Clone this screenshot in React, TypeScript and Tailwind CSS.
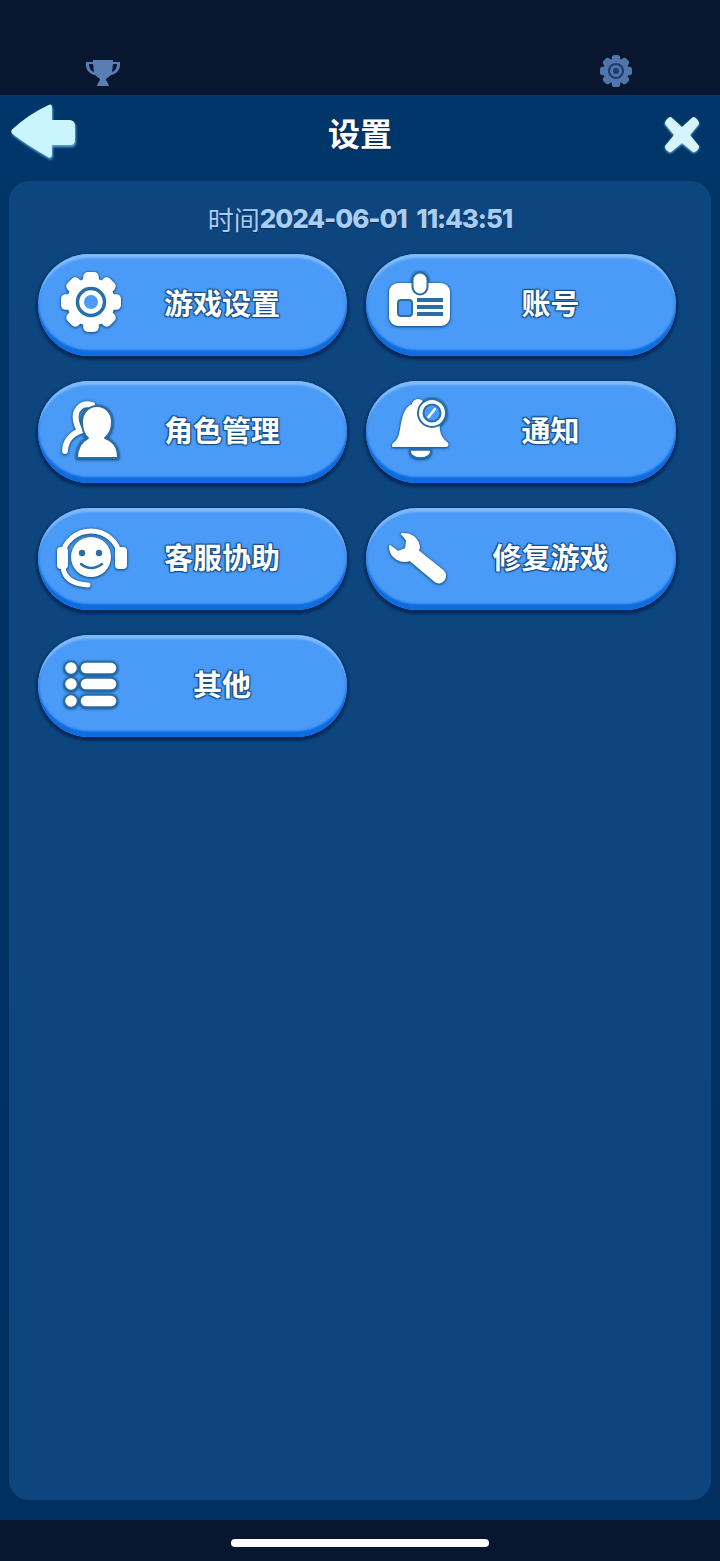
import type { ReactNode } from 'react';

const ICON_CLASS = 'w-[72px] h-[72px] overflow-visible [filter:drop-shadow(0_0_1px_#1a5a96)_drop-shadow(0_1px_1px_#1a5a96)]';
const TEETH = [0, 45, 90, 135, 180, 225, 270, 315];

function Gear({ cx, cy, r, fill }: { cx: number; cy: number; r: number; fill: string }) {
  const w = r * 0.52;
  return (
    <g fill={fill}>
      <circle cx={cx} cy={cy} r={r * 0.8} />
      {TEETH.map((a) => (
        <rect key={a} x={cx - w / 2} y={cy - r} width={w} height={r * 0.5} rx={r * 0.16} transform={`rotate(${a} ${cx} ${cy})`} />
      ))}
    </g>
  );
}

function GearIcon() {
  return (
    <svg viewBox="0 0 72 72" className={ICON_CLASS}>
      <Gear cx={36} cy={33} r={30} fill="#fff" />
      <circle cx={36} cy={33} r={13.5} fill="#fff" stroke="#2a6ea8" strokeWidth={3.5} />
      <circle cx={36} cy={33} r={7} fill="#4a9bf7" />
    </svg>
  );
}

function PersonIcon() {
  return (
    <svg viewBox="0 0 72 72" className={ICON_CLASS}>
      <path d="M37 9C26 6 19 14 21 25C22 30 24 33 25 35C16 38 10 46 10 55" fill="none" stroke="#fff" strokeWidth={6} strokeLinecap="round" />
      <path d="M22 62C22 50 27 45 33 42C28 38 27 32 27 26C27 16 34 10 42 10C50 10 57 16 57 26C57 32 55 38 50 42C58 45 63 50 63 62Z" fill="#fff" stroke="#2a6ea8" strokeWidth={2} strokeLinejoin="round" />
    </svg>
  );
}

function CardIcon() {
  return (
    <svg viewBox="0 0 72 72" className={ICON_CLASS}>
      <g transform="translate(1 0)">
        <rect x={5} y={14} width={61} height={43} rx={9} fill="#fff" />
        <rect x={28.5} y={3.5} width={15} height={22} rx={7.5} fill="#fff" stroke="#2a6ea8" strokeWidth={2} />
        <rect x={14} y={31} width={14} height={16} rx={3} fill="#4a9bf7" stroke="#2a6ea8" strokeWidth={2} />
        <rect x={33} y={29} width={26} height={4} fill="#2a6ea8" />
        <rect x={33} y={36} width={26} height={4} fill="#2a6ea8" />
        <rect x={33} y={43} width={26} height={4} fill="#2a6ea8" />
      </g>
    </svg>
  );
}

function BellIcon() {
  return (
    <svg viewBox="0 0 72 72" className={ICON_CLASS}>
      <g transform="translate(1 0)">
        <path d="M26 54H47C47 60 42 62 36.5 62C31 62 26 60 26 54Z" fill="#fff" stroke="#2a6ea8" strokeWidth={1.5} />
        <path d="M8 50C8 47 11 46 13 43C18 36 15 14 28 8C29 3 37 1 39 6C50 10 55 20 56 34C57 41 61 44 64 47C65 49 64 51 62 51H10C9 51 8 51 8 50Z" fill="#fff" />
        <circle cx={48} cy={17} r={14} fill="#fff" stroke="#2a6ea8" strokeWidth={2} />
        <circle cx={48} cy={17} r={8.5} fill="#4a9bf7" stroke="#2a6ea8" strokeWidth={2} />
        <path d="M44.5 21L51 13" stroke="#fff" strokeWidth={2.5} strokeLinecap="round" />
      </g>
    </svg>
  );
}

function HeadsetIcon() {
  return (
    <svg viewBox="0 0 72 72" className={ICON_CLASS}>
      <path d="M7 32A29.5 29.5 0 0 1 65 32" fill="none" stroke="#fff" strokeWidth={5} />
      <rect x={2} y={24} width={11} height={22} rx={4} fill="#fff" />
      <rect x={60} y={24} width={12} height={22} rx={4} fill="#fff" />
      <path d="M8 44C9 54 16 61 33 62" fill="none" stroke="#fff" strokeWidth={5} strokeLinecap="round" />
      <circle cx={36} cy={34} r={20} fill="#fff" />
      <circle cx={27} cy={30} r={3.2} fill="#2a6ea8" />
      <circle cx={44} cy={30} r={3.2} fill="#2a6ea8" />
      <path d="M26 41Q36 49 47 41" fill="none" stroke="#2a6ea8" strokeWidth={2.5} strokeLinecap="round" />
    </svg>
  );
}

function WrenchIcon() {
  return (
    <svg viewBox="0 0 72 72" className={ICON_CLASS}>
      <path d="M19 11C28 10 35 16 36 24L35 28L60 48C66 54 58 63 52 58L27 37C18 40 8 35 7 25L7 23L15 29L23 26L24 17Z" fill="#fff" strokeLinejoin="round" stroke="#fff" strokeWidth={2} />
    </svg>
  );
}

function ListIcon() {
  return (
    <svg viewBox="0 0 72 72" className={ICON_CLASS}>
      {[18, 34, 51].map((y) => (
        <g key={y} fill="#fff" stroke="#2a6ea8" strokeWidth={1.5}>
          <circle cx={16} cy={y} r={6.5} />
          <rect x={25} y={y - 6} width={37} height={12} rx={6} />
        </g>
      ))}
    </svg>
  );
}

const buttons: { label: string; icon: ReactNode }[] = [
  { label: '游戏设置', icon: <GearIcon /> },
  { label: '账号', icon: <CardIcon /> },
  { label: '角色管理', icon: <PersonIcon /> },
  { label: '通知', icon: <BellIcon /> },
  { label: '客服协助', icon: <HeadsetIcon /> },
  { label: '修复游戏', icon: <WrenchIcon /> },
  { label: '其他', icon: <ListIcon /> },
];

function MenuButton({ label, icon }: { label: string; icon: ReactNode }) {
  return (
    <button className="flex h-[102px] items-center rounded-full bg-[#4a9bf7] pr-[47px] shadow-[inset_0_5px_2px_-1px_#7fb9f9,inset_0_-7px_2px_-1px_#0f6ce0,inset_0_0_3px_1px_#2f80e6,0_2px_3px_2px_#04295a]">
      <span className="flex w-[106px] shrink-0 justify-center">{icon}</span>
      <span className="flex-1 pb-[6px] text-center text-[29px] font-bold leading-none text-white [font-family:'Noto_Sans_CJK_SC',sans-serif] [text-shadow:0_0_2px_#174f8c,1px_1px_1px_#174f8c,-1px_1px_1px_#174f8c,1px_-1px_1px_#174f8c,-1px_-1px_1px_#174f8c]">
        {label}
      </span>
    </button>
  );
}

export default function App() {
  return (
    <div className="flex h-[1561px] w-[720px] flex-col overflow-hidden bg-[#08172f] [font-family:'Noto_Sans_CJK_SC',sans-serif]">
      <div className="flex h-[95px] shrink-0 items-end justify-between pb-[8px] pl-[85px] pr-[88px]">
        <svg viewBox="0 0 36 28" className="h-[28px] w-[36px]">
          <path d="M8 1H28V3H35C36 10 32 15 26 16C24 18 22 19 21 20C21 22 23 23 24 27H12C13 23 15 22 15 20C14 19 12 18 10 16C4 15 0 10 1 3H8Z" fill="#5a7db2" />
          <path d="M8 5H4C4 9 6 12 9 13ZM28 5H32C32 9 30 12 27 13Z" fill="#08172f" />
        </svg>
        <svg viewBox="0 0 32 32" className="h-[32px] w-[32px]">
          <Gear cx={16} cy={16} r={16} fill="#4f77ad" />
          <circle cx={16} cy={16} r={7} fill="none" stroke="#1f3a66" strokeWidth={2} />
          <circle cx={16} cy={16} r={3} fill="#1f3a66" />
        </svg>
      </div>

      <div className="flex flex-1 flex-col bg-gradient-to-b from-[#003669] to-[#012f60] px-[9px] pb-[20px]">
        <div className="grid h-[86px] shrink-0 grid-cols-[1fr_auto_1fr] items-center">
          <div className="flex pb-[14px] pl-[1px]">
            <svg viewBox="0 0 66 56" className="h-[56px] w-[66px] [filter:drop-shadow(1px_2px_1px_#5ea6d8)]">
              <path d="M3 27C14 17 26 9 39 3C41 2 41 3 41 5V18H60C62 18 64 20 64 22V37C64 40 62 41 60 41H41V51C41 53 40 54 38 53C26 46 13 38 3 30C2 29 2 28 3 27Z" fill="#c9f5ff" stroke="#c9f5ff" strokeWidth={2} strokeLinejoin="round" />
            </svg>
          </div>
          <h1 className="pb-[12px] text-[32px] font-bold leading-none text-white [text-shadow:0_1px_1px_#0a2a55]">设置</h1>
          <div className="flex justify-end pb-[6px] pr-[10px]">
            <svg viewBox="0 0 38 38" className="h-[38px] w-[38px] [filter:drop-shadow(0_1px_1px_#7cc0e8)]">
              <path d="M8 1L19 11L30 1C32 0 37 6 36 8L27 19L36 30C37 32 32 37 30 36L19 27L8 36C6 37 1 32 2 30L11 19L2 8C1 6 6 0 8 1Z" fill="#d6f4fb" />
            </svg>
          </div>
        </div>

        <div className="flex-1 rounded-[20px] bg-[#0d467e] px-[29px]">
          <div className="flex h-[73px] items-center justify-center pb-[1px] pt-[3px] text-[26px] leading-none text-[#a9cdf3] [text-shadow:0_1px_1px_#0a2a55]">
            <span>时间</span>
            <span className="font-extrabold tracking-[-1.1px] [font-family:Inter,sans-serif] [word-spacing:5px]">2024-06-01 11:43:51</span>
          </div>
          <div className="grid grid-cols-[309px_310px] gap-x-[19px] gap-y-[25px]">
            {buttons.map((b) => (
              <MenuButton key={b.label} label={b.label} icon={b.icon} />
            ))}
          </div>
        </div>
      </div>

      <div className="flex h-[41px] shrink-0 justify-center pt-[19px]">
        <div className="h-[8px] w-[258px] rounded-full bg-white" />
      </div>
    </div>
  );
}
